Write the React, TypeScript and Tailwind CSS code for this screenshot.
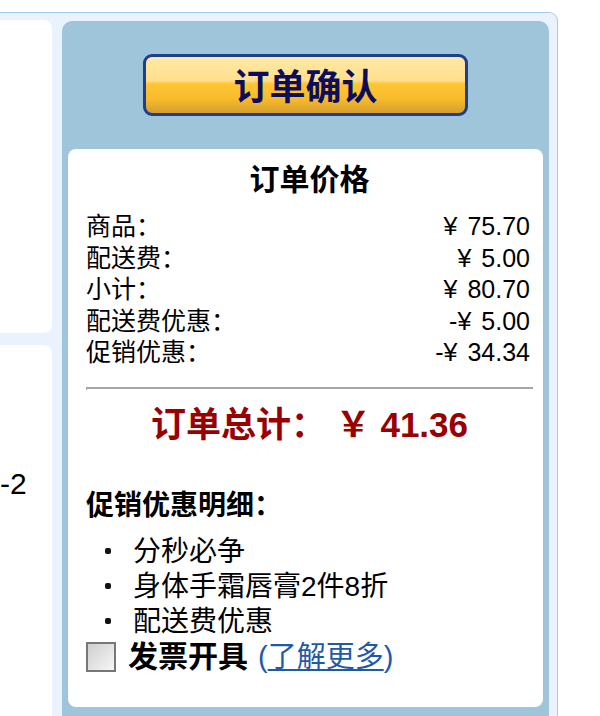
export default function App() {
  const rows: [string, string, string][] = [
    ["商品：", "", "75.70"],
    ["配送费：", "", "5.00"],
    ["小计：", "", "80.70"],
    ["配送费优惠：", "-", "5.00"],
    ["促销优惠：", "-", "34.34"],
  ];
  const bullets = ["分秒必争", "身体手霜唇膏2件8折", "配送费优惠"];
  return (
    <div className="w-[600px] h-[716px] overflow-hidden bg-white pt-[12px] font-['Liberation_Sans','Noto_Sans_CJK_SC',sans-serif] text-black">
      <div className="w-[558px] h-[720px] flex border-t border-r border-[#a3cbee] rounded-tr-[9px] bg-[#eaf3fd] pt-[7px] pr-[8px]">
        <div className="w-[52px] flex flex-col gap-[12px]">
          <div className="h-[313px] bg-white rounded-r-[8px]" />
          <div className="flex-1 bg-white rounded-tr-[8px] pt-[122px] text-[30px] leading-[34px]">-2</div>
        </div>
        <div className="ml-[10px] mt-[1px] w-[487px] bg-[#9fc5da] rounded-[10px] px-[6px] pt-[33px]">
          <div className="mx-auto w-[325px] h-[62px] rounded-[9px] border-[3px] border-[#1d3f8f] bg-[linear-gradient(to_bottom,#ffe9a6_0%,#ffdf8c_42%,#ffc633_48%,#f7bb2c_75%,#d49d2f_100%)] flex items-center justify-center">
            <span className="text-[36px] font-bold leading-none text-[#0d0d5e] pt-[6px]">订单确认</span>
          </div>
          <div className="mt-[33px] h-[558px] bg-white rounded-[8px] pl-[18px] pr-[10px] pt-[14px]">
            <div className="h-[34px] leading-[34px] text-[30px] font-bold text-center">订单价格</div>
            <div className="mt-[14px] pr-[3px]">
              {rows.map(([k, sign, v]) => (
                <div key={k} className="flex justify-between h-[31.5px] leading-[31.5px] text-[25px]">
                  <span>{k}</span>
                  <span>
                    {sign}¥<span className="ml-[10px]">{v}</span>
                  </span>
                </div>
              ))}
            </div>
            <div className="mt-[18px] h-[3px] border-t-2 border-l border-[#a6a6a6]" />
            <div className="mt-[15px] h-[40px] leading-[40px] text-[35px] font-bold text-[#990000] text-center">
              订单总计： ￥ 41.36
            </div>
            <div className="mt-[44px] h-[34px] leading-[34px] text-[28px] font-bold">促销优惠明细：</div>
            <ul className="mt-[11px]">
              {bullets.map((b) => (
                <li key={b} className="flex items-center h-[35px] leading-[35px] text-[28px]">
                  <span className="ml-[19px] mr-[22px] w-[6px] h-[6px] rounded-[2px] bg-[#111111]" />
                  <span>{b}</span>
                </li>
              ))}
            </ul>
            <div className="flex items-center h-[36px]">
              <span className="w-[30px] h-[30px] border-2 border-[#777777] bg-[linear-gradient(to_bottom_right,#cfcfcf,#f6f6f6)]" />
              <span className="ml-[12px] text-[30px] font-bold leading-[36px]">发票开具</span>
              <span className="ml-[10px] text-[29px] leading-[36px] text-[#1f5aa6]">
                (<span className="underline">了解更多</span>)
              </span>
            </div>
          </div>
        </div>
      </div>
    </div>
  );
}
